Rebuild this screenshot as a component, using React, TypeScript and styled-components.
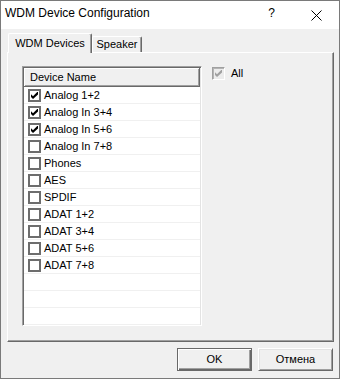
import React from "react";
import styled, { createGlobalStyle } from "styled-components";

const GlobalStyle = createGlobalStyle`
  html, body {
    margin: 0;
    padding: 0;
    background: #f0f0f0;
  }
  body {
    font-family: "Liberation Sans", Arial, sans-serif;
    color: #000;
  }
`;

const devices = [
    { name: "Analog 1+2", checked: true },
    { name: "Analog In 3+4", checked: true },
    { name: "Analog In 5+6", checked: true },
    { name: "Analog In 7+8", checked: false },
    { name: "Phones", checked: false },
    { name: "AES", checked: false },
    { name: "SPDIF", checked: false },
    { name: "ADAT 1+2", checked: false },
    { name: "ADAT 3+4", checked: false },
    { name: "ADAT 5+6", checked: false },
    { name: "ADAT 7+8", checked: false },
];

const Tick = ({ color }: { color: string }) => (
    <svg width="7" height="7" viewBox="0 0 7 7">
        <path d="M0 2.2 L2 4.2 L6.2 0 L7 0 L7 2.6 L2 7 L0 5 Z" fill={color} />
    </svg>
);

export default function App() {
    return (
        <>
            <GlobalStyle />
            <Window>
                <TitleBar>
                    <Title>WDM Device Configuration</Title>
                    <CaptionButton>?</CaptionButton>
                    <CaptionButton>
                        <svg width="11" height="11" viewBox="0 0 11 11">
                            <path d="M0.5 0.5 L10.5 10.5 M10.5 0.5 L0.5 10.5" stroke="#000" strokeWidth="1" />
                        </svg>
                    </CaptionButton>
                </TitleBar>
                <Client>
                    <TabStrip>
                        <Tab $active $width={84}>WDM Devices</Tab>
                        <Tab $width={50}>Speaker</Tab>
                    </TabStrip>
                    <Panel>
                        <ListBox>
                            <Header>Device Name</Header>
                            {devices.map((d) => (
                                <Row key={d.name}>
                                    <CheckBox>{d.checked && <Tick color="#000" />}</CheckBox>
                                    <RowText>{d.name}</RowText>
                                </Row>
                            ))}
                            <Row />
                            <Row />
                            <Row />
                        </ListBox>
                        <AllOption>
                            <DisabledBox>
                                <Tick color="#a0a0a0" />
                            </DisabledBox>
                            <Label>All</Label>
                        </AllOption>
                    </Panel>
                    <ButtonRow>
                        <Button $default>OK</Button>
                        <Button>Отмена</Button>
                    </ButtonRow>
                </Client>
            </Window>
        </>
    );
}

const Window = styled.div`
    width: 340px;
    height: 379px;
    box-sizing: border-box;
    border: 1px solid #7a7a7a;
    background: #f0f0f0;
    display: flex;
    flex-direction: column;
`;

const TitleBar = styled.div`
    height: 28px;
    flex-shrink: 0;
    background: #fff;
    display: flex;
    align-items: flex-start;
`;

const Title = styled.div`
    flex: 1;
    font-size: 12px;
    line-height: 14px;
    padding: 5px 0 0 4px;
`;

const CaptionButton = styled.div`
    width: 45px;
    height: 28px;
    display: flex;
    justify-content: center;
    align-items: flex-start;
    padding-top: 5px;
    box-sizing: border-box;
    font-size: 12px;
    line-height: 14px;

    svg {
        margin-top: 4px;
    }
`;

const Client = styled.div`
    flex: 1;
    display: flex;
    flex-direction: column;
    padding-top: 4px;
`;

const TabStrip = styled.div`
    display: flex;
    align-items: flex-end;
    height: 19px;
    margin-left: 7px;
    position: relative;
    z-index: 1;
`;

const Tab = styled.div<{ $active?: boolean; $width: number }>`
    box-sizing: border-box;
    width: ${(p) => p.$width}px;
    height: ${(p) => (p.$active ? 20 : 16)}px;
    margin-bottom: ${(p) => (p.$active ? -1 : 0)}px;
    padding-top: ${(p) => (p.$active ? 3 : 1)}px;
    background: #f0f0f0;
    border-top: 1px solid #fff;
    border-left: 1px solid #fff;
    border-right: 1px solid #696969;
    border-radius: 2px 2px 0 0;
    box-shadow: inset -1px 0 #a0a0a0;
    font-size: 11px;
    line-height: 13px;
    text-align: center;
`;

const Panel = styled.div`
    box-sizing: border-box;
    width: 327px;
    height: 290px;
    margin-left: 6px;
    border-top: 1px solid #fff;
    border-left: 1px solid #fff;
    border-right: 1px solid #696969;
    border-bottom: 1px solid #696969;
    box-shadow: inset -1px -1px #a0a0a0;
    padding: 13px 0 0 14px;
    display: flex;
    align-items: flex-start;
    gap: 10px;
`;

const ListBox = styled.div`
    box-sizing: border-box;
    width: 180px;
    height: 260px;
    padding: 1px;
    border: 1px solid;
    border-color: #a0a0a0 #fff #fff #a0a0a0;
    box-shadow: inset 1px 1px #696969, inset -1px -1px #e3e3e3;
    background: #fff;
    overflow: hidden;
`;

const Header = styled.div`
    box-sizing: border-box;
    height: 19px;
    background: #f0f0f0;
    border-right: 1px solid #696969;
    border-bottom: 1px solid #696969;
    box-shadow: inset 1px 1px #fff, inset -1px -1px #a0a0a0;
    font-size: 11px;
    line-height: 13px;
    padding: 3px 0 0 6px;
`;

const Row = styled.div`
    box-sizing: border-box;
    height: 17px;
    border-bottom: 1px solid #f0f0f0;
    display: flex;
    align-items: flex-start;
    padding-left: 4px;
    gap: 3px;
`;

const CheckBox = styled.div`
    box-sizing: border-box;
    width: 13px;
    height: 13px;
    margin-top: 2px;
    border: 2px solid #6d6d6d;
    background: #fff;
    display: flex;
    align-items: center;
    justify-content: center;
`;

const RowText = styled.span`
    font-size: 11px;
    line-height: 16px;
`;

const AllOption = styled.div`
    display: flex;
    align-items: flex-start;
    gap: 6px;
    margin-top: 1px;
`;

const DisabledBox = styled.div`
    box-sizing: border-box;
    width: 13px;
    height: 13px;
    border: 1px solid;
    border-color: #a0a0a0 #fff #fff #a0a0a0;
    box-shadow: inset 1px 1px #b4b4b4;
    background: #ececec;
    display: flex;
    align-items: center;
    justify-content: center;
`;

const Label = styled.span`
    font-size: 11px;
    line-height: 13px;
`;

const ButtonRow = styled.div`
    display: flex;
    justify-content: flex-end;
    gap: 6px;
    margin-top: 6px;
    padding-right: 6px;
`;

const Button = styled.div<{ $default?: boolean }>`
    box-sizing: border-box;
    width: 75px;
    height: 23px;
    background: #f0f0f0;
    border: 1px solid;
    border-color: ${(p) => (p.$default ? "#696969" : "#fff #696969 #696969 #fff")};
    box-shadow: ${(p) =>
        p.$default
            ? "inset 1px 1px #fff, inset -1px -1px #696969, inset -2px -2px #a0a0a0"
            : "inset 1px 1px #e3e3e3, inset -1px -1px #a0a0a0"};
    font-size: 11px;
    line-height: 13px;
    display: flex;
    align-items: center;
    justify-content: center;
`;
